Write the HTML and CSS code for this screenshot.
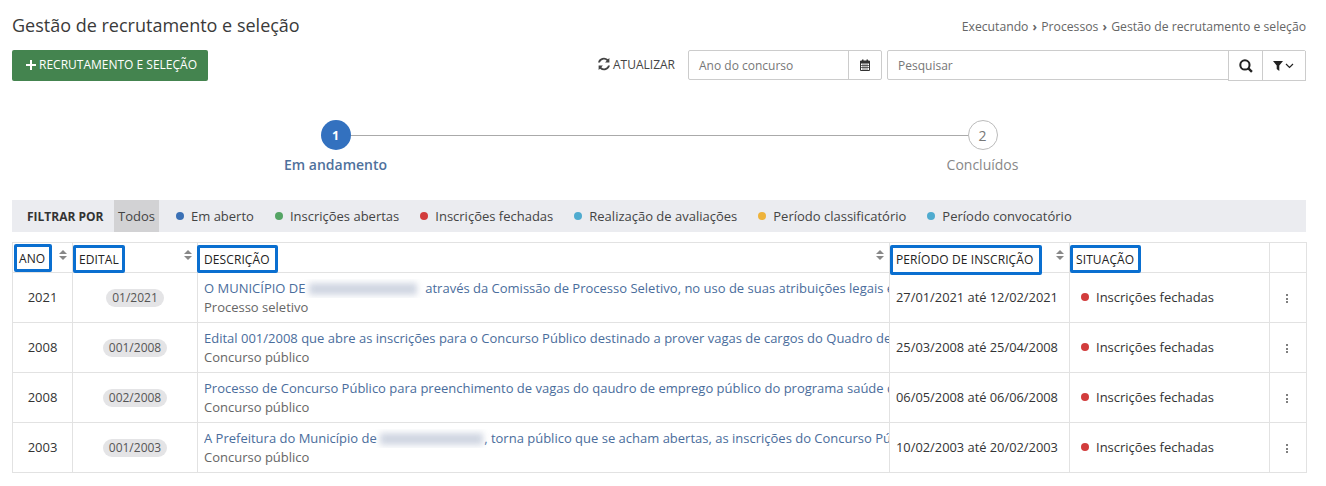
FILE: index.html
```html
<!DOCTYPE html>
<html lang="pt-BR">
<head>
<meta charset="utf-8">
<title>Gestão de recrutamento e seleção</title>
<link rel="stylesheet" href="styles.css">
</head>
<body>
<header class="top">
  <h1>Gestão de recrutamento e seleção</h1>
  <nav class="crumbs">Executando <b>›</b> Processos <b>›</b> Gestão de recrutamento e seleção</nav>
</header>
<section class="tools">
  <button class="add"><svg width="10" height="10" viewBox="0 0 10 10"><path d="M4 0h2v4h4v2H6v4H4V6H0V4h4z" fill="#fff"/></svg>RECRUTAMENTO E SELEÇÃO</button>
  <div class="right">
    <span class="refresh"><svg width="14" height="14" viewBox="0 0 13 13"><path d="M11.500 1v4h-4l1.500-1.500A3.800 3.800 0 0 0 2.700 5H1a5.500 5.500 0 0 1 9.200-2.800zM1.500 12V8h4L4 9.500A3.800 3.800 0 0 0 10.300 8H12a5.500 5.500 0 0 1-9.200 2.800z" fill="#444"/></svg>ATUALIZAR</span>
    <div class="field year"><span class="ph">Ano do concurso</span><span class="addon"><svg width="12" height="12" viewBox="0 0 12 12"><path d="M1.500 2h9v9.500h-9z" fill="none" stroke="#333"/><path d="M1.500 2h9v2.500h-9zM3 .5h1.500V3H3zM7.500 .5H9V3H7.500z" fill="#333"/><path d="M1.500 6.500h9M1.500 8.500h9M4 4.500v7M6 4.500v7M8 4.500v7" stroke="#333" stroke-width=".7"/></svg></span></div>
    <div class="field search"><span class="ph">Pesquisar</span>
      <span class="addon a-search"><svg width="14" height="14" viewBox="0 0 13 13"><circle cx="5.500" cy="5.500" r="4.300" fill="none" stroke="#222" stroke-width="1.900"/><path d="M8.500 8.500l3.500 3.500" stroke="#222" stroke-width="2.200"/></svg></span>
      <span class="addon a-filter"><svg width="22" height="11" viewBox="0 0 22 11"><path d="M0 1h10L6.300 5.500V11L3.700 9V5.500z" fill="#222"/><path d="M13 4l3.500 3.500L20 4" fill="none" stroke="#222" stroke-width="1.200"/></svg></span>
    </div>
  </div>
</section>
<section class="steps">
  <div class="step active"><span class="num">1</span><span class="lbl">Em andamento</span></div>
  <div class="step"><span class="num">2</span><span class="lbl">Concluídos</span></div>
</section>
<section class="filters">
  <strong>FILTRAR POR</strong>
  <span class="all">Todos</span>
  <span class="f"><i class="dot blue"></i>Em aberto</span>
  <span class="f"><i class="dot green"></i>Inscrições abertas</span>
  <span class="f"><i class="dot red"></i>Inscrições fechadas</span>
  <span class="f"><i class="dot cyan"></i>Realização de avaliações</span>
  <span class="f"><i class="dot yellow"></i>Período classificatório</span>
  <span class="f"><i class="dot cyan"></i>Período convocatório</span>
</section>
<table>
  <colgroup><col class="c1"><col class="c2"><col class="c3"><col class="c4"><col class="c5"><col class="c6"></colgroup>
  <thead>
    <tr>
      <th><span class="mark m-ano">ANO</span><i class="sort"></i></th>
      <th><span class="mark m-edital">EDITAL</span><i class="sort"></i></th>
      <th><span class="mark m-desc">DESCRIÇÃO</span><i class="sort"></i></th>
      <th><span class="mark m-per">PERÍODO DE INSCRIÇÃO</span><i class="sort"></i></th>
      <th><span class="mark m-sit">SITUAÇÃO</span></th>
      <th></th>
    </tr>
  </thead>
  <tbody>
    <tr>
      <td class="ctr">2021</td><td class="ctr"><span class="pill">01/2021</span></td>
      <td class="desc"><a>O MUNICÍPIO DE <span class="blur b1"></span> através da Comissão de Processo Seletivo, no uso de suas atribuições legais e</a><small>Processo seletivo</small></td>
      <td class="per">27/01/2021 até 12/02/2021</td>
      <td class="sit"><i class="dot red"></i>Inscrições fechadas</td><td class="ctr"><span class="kebab"><i></i><i></i><i></i></span></td>
    </tr>
    <tr>
      <td class="ctr">2008</td><td class="ctr"><span class="pill">001/2008</span></td>
      <td class="desc"><a>Edital 001/2008 que abre as inscrições para o Concurso Público destinado a prover vagas de cargos do Quadro de</a><small>Concurso público</small></td>
      <td class="per">25/03/2008 até 25/04/2008</td>
      <td class="sit"><i class="dot red"></i>Inscrições fechadas</td><td class="ctr"><span class="kebab"><i></i><i></i><i></i></span></td>
    </tr>
    <tr>
      <td class="ctr">2008</td><td class="ctr"><span class="pill">002/2008</span></td>
      <td class="desc"><a>Processo de Concurso Público para preenchimento de vagas do qaudro de emprego público do programa saúde d</a><small>Concurso público</small></td>
      <td class="per">06/05/2008 até 06/06/2008</td>
      <td class="sit"><i class="dot red"></i>Inscrições fechadas</td><td class="ctr"><span class="kebab"><i></i><i></i><i></i></span></td>
    </tr>
    <tr>
      <td class="ctr">2003</td><td class="ctr"><span class="pill">001/2003</span></td>
      <td class="desc"><a>A Prefeitura do Município de <span class="blur b2"></span>, torna público que se acham abertas, as inscrições do Concurso Pú</a><small>Concurso público</small></td>
      <td class="per">10/02/2003 até 20/02/2003</td>
      <td class="sit"><i class="dot red"></i>Inscrições fechadas</td><td class="ctr"><span class="kebab"><i></i><i></i><i></i></span></td>
    </tr>
  </tbody>
</table>
</body>
</html>
```
FILE: styles.css
```css
* { box-sizing: border-box; }
html, body { margin: 0; height: 486px; overflow: hidden; }
body { padding: 0 20px 0 12px; background: #fff; font: 13px/17px "Open Sans", sans-serif; color: #333; }

.top { display: flex; justify-content: space-between; align-items: center; height: 50px; padding-top: 3px; }
h1 { margin: 0; padding-bottom: 4px; font-size: 18px; font-weight: 400; line-height: 24px; color: #3a3a3a; }
.crumbs { font-size: 12.200px; color: #666; }
.crumbs b { font-weight: 700; margin: 0 1px; }

.tools { display: flex; justify-content: space-between; align-items: flex-start; height: 31px; }
.add { display: flex; align-items: center; gap: 3px; width: 196px; height: 31px; padding: 0 0 2px 14px; border: 0; border-radius: 2px; background: #44844f; color: #fff; font: 12px "Open Sans", sans-serif; }
.right { display: flex; align-items: center; height: 30px; }
.refresh { display: flex; align-items: center; gap: 2px; margin-right: 13px; font-size: 12px; color: #444; padding-bottom: 2px; }
.field { display: flex; align-items: flex-start; height: 30px; border: 1px solid #ccc; border-radius: 2px; font-size: 12px; color: #777; }
.ph { flex: 1; align-self: center; padding-left: 10px; }
.addon { display: flex; align-items: center; justify-content: center; height: 28px; border-left: 1px solid #ccc; }
.year { width: 194px; margin-right: 5px; }
.year .addon { flex: 0 0 33px; }
.search { width: 419px; }
.a-search, .a-filter { height: 30px; border-bottom: 1px solid #ccc; background: #fff; }
.a-search { flex: 0 0 34px; }
.a-filter { flex: 0 0 44px; margin-right: -1px; border-right: 1px solid #ccc; }

.steps { display: grid; grid-template-columns: 647px 647px; height: 119px; padding-top: 39px; }
.step { position: relative; display: flex; flex-direction: column; align-items: center; }
.step.active::after { content: ""; position: absolute; left: 50%; width: 100%; top: 15px; height: 1px; background: #aaa; }
.num { position: relative; z-index: 1; display: flex; align-items: center; justify-content: center; width: 30px; height: 30px; border: 1px solid #bbb; border-radius: 50%; background: #fff; font-size: 14px; color: #777; }
.lbl { margin-top: 5px; font-size: 14px; line-height: 20px; color: #888; }
.active .num { border: 0; background: #3371bf; color: #fff; font-weight: 700; font-size: 12.500px; }
.active .lbl { color: #4f719c; font-weight: 600; }

.filters { display: flex; align-items: center; height: 32px; padding-left: 15px; background: #ebecf0; color: #444; }
.filters strong { flex: 0 0 87px; font-size: 12px; font-weight: 700; color: #333; }
.all { display: flex; align-items: center; justify-content: center; flex: 0 0 45px; height: 32px; margin-right: 17px; background: #d2d2d4; }
.f { margin-right: 21px; white-space: nowrap; }
.dot { display: inline-block; width: 8px; height: 8px; border-radius: 50%; margin-right: 7px; vertical-align: 1px; }
.blue { background: #3a70b5; }
.green { background: #54a464; }
.red { background: #d23c3c; }
.cyan { background: #4fabcf; }
.yellow { background: #eeb33b; }

table { width: 1294px; margin-top: 10px; border-collapse: collapse; table-layout: fixed; }
.c1 { width: 60px; } .c2 { width: 125px; } .c3 { width: 692px; } .c4 { width: 180px; } .c5 { width: 200px; } .c6 { width: 37px; }
th, td { border: 1px solid #e2e2e2; padding: 0; overflow: hidden; white-space: nowrap; }
th { position: relative; height: 30px; text-align: left; font-size: 12px; color: #222; overflow: visible; }
td { height: 50px; color: #333; }
.mark { display: block; position: absolute; top: 2px; height: 28px; padding-top: 3px; border: 3px solid #0a6fd0; border-radius: 2px; line-height: 18px; font-weight: 400; letter-spacing: .1px; }
.m-ano { left: 1px; width: 38px; top: 1px; padding-left: 2px; }
.m-edital { left: 0; width: 52px; padding-left: 3px; }
.m-desc { left: -1px; width: 81px; padding-left: 4px; }
.m-per { left: 0; width: 152px; height: 30px; padding-left: 3px; }
.m-sit { left: 0; width: 71px; padding-left: 3px; }
.sort { position: absolute; right: 5px; top: 7px; width: 8px; height: 10px; }
.sort::before, .sort::after { content: ""; position: absolute; left: 0; border-left: 4px solid transparent; border-right: 4px solid transparent; }
.sort::before { top: 0; border-bottom: 4px solid #888; }
.sort::after { bottom: 0; border-top: 4px solid #888; }
.ctr { text-align: center; }
.pill { display: inline-block; padding: 0 6px; height: 18px; line-height: 18px; border-radius: 9px; background: #e4e4e6; color: #555; font-size: 12px; }
.desc { padding-left: 6px; line-height: 19px; }
.desc a { display: block; color: #4a6d9c; overflow: hidden; }
.desc small { display: block; font-size: 13px; color: #666; }
.blur { display: inline-block; height: 12px; vertical-align: -2px; background: #d0d6e2; filter: blur(3px); }
.b1 { width: 108px; margin-right: 5px; }
.b2 { width: 103px; margin-right: 1px; }
.per { padding-left: 6px; font-size: 12.850px; }
.sit { padding-left: 11px; }
.kebab { display: inline-flex; flex-direction: column; gap: 1.500px; margin-right: 2px; vertical-align: middle; }
.kebab i { width: 2px; height: 2px; background: #555; border-radius: 50%; }
```
